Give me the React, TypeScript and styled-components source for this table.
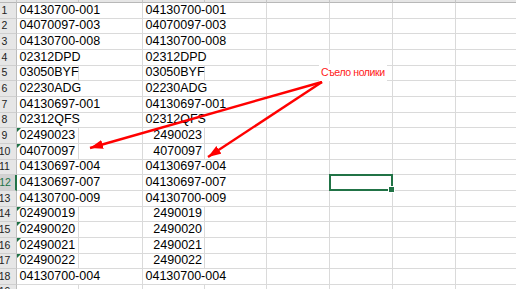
import styled, { createGlobalStyle } from 'styled-components'

type Row = { a: string; c: string; num?: boolean; short?: boolean }

const rows: Row[] = [
  { a: '04130700-001', c: '04130700-001' },
  { a: '04070097-003', c: '04070097-003' },
  { a: '04130700-008', c: '04130700-008' },
  { a: '02312DPD', c: '02312DPD' },
  { a: '03050BYF', c: '03050BYF', short: true },
  { a: '02230ADG', c: '02230ADG' },
  { a: '04130697-001', c: '04130697-001' },
  { a: '02312QFS', c: '02312QFS' },
  { a: '02490023', c: '2490023', num: true, short: true },
  { a: '04070097', c: '4070097', num: true, short: true },
  { a: '04130697-004', c: '04130697-004' },
  { a: '04130697-007', c: '04130697-007' },
  { a: '04130700-009', c: '04130700-009' },
  { a: '02490019', c: '2490019', num: true, short: true },
  { a: '02490020', c: '2490020', num: true, short: true },
  { a: '02490021', c: '2490021', num: true, short: true },
  { a: '02490022', c: '2490022', num: true, short: true },
  { a: '04130700-004', c: '04130700-004' },
  { a: '', c: '', short: true },
]

const SELECTED_ROW = 12
const COLS = ['62px', '64px', '62px', '62px', '63px', '63px', '63px', '63px']

const GlobalStyle = createGlobalStyle`
  body {
    margin: 0;
    background: #fff;
    overflow: hidden;
  }
`

const Sheet = styled.div`
  position: relative;
  width: 516px;
  height: 289px;
  overflow: hidden;
  font-family: 'Liberation Sans', Arial, sans-serif;
`

const Grid = styled.div`
  display: grid;
  grid-template-columns: 17px ${COLS.join(' ')};
  grid-template-rows: 3px;
  grid-auto-rows: 15.67px;
`

const ColHead = styled.div`
  background: #e6e6e6;
  border-right: 1px solid #c6c6c6;
  border-bottom: 1px solid #b8b8b8;
  box-sizing: border-box;
`

const RowHead = styled.div<{ $active?: boolean }>`
  display: flex;
  align-items: flex-end;
  justify-content: center;
  padding: 0 ${(p) => (p.$active ? 5 : 7)}px 1px 0;
  box-sizing: border-box;
  overflow: visible;
  white-space: nowrap;
  font-size: 10.5px;
  line-height: 13px;
  color: ${(p) => (p.$active ? '#217346' : '#222')};
  background: ${(p) => (p.$active ? '#d2d2d2' : '#e6e6e6')};
  border-bottom: 1px solid #cfcfcf;
  border-right: ${(p) => (p.$active ? '2px solid #217346' : '1px solid #bdbdbd')};
`

const Cell = styled.div<{ $span?: number; $num?: boolean; $flag?: boolean; $selected?: boolean }>`
  position: relative;
  grid-column: span ${(p) => p.$span ?? 1};
  display: flex;
  align-items: flex-end;
  justify-content: ${(p) => (p.$num ? 'flex-end' : 'flex-start')};
  padding: 0 2px 1px 2.5px;
  box-sizing: border-box;
  white-space: nowrap;
  font-size: 12.5px;
  line-height: 14px;
  color: #000;
  border-right: 1px solid #dadada;
  border-bottom: 1px solid #dadada;

  &::before {
    content: '';
    display: ${(p) => (p.$flag ? 'block' : 'none')};
    position: absolute;
    left: 0;
    top: 0;
    border-top: 4px solid #1e7145;
    border-right: 4px solid transparent;
  }

  &::after {
    content: '';
    display: ${(p) => (p.$selected ? 'block' : 'none')};
    position: absolute;
    left: -1px;
    top: -1px;
    right: -1px;
    bottom: -1px;
    border: 2px solid #217346;
  }
`

const Handle = styled.span`
  position: absolute;
  right: -3px;
  bottom: -3px;
  width: 5px;
  height: 5px;
  background: #217346;
  border: 1px solid #fff;
  z-index: 2;
`

const Overlay = styled.svg`
  position: absolute;
  inset: 0;
  pointer-events: none;
`

const Note = styled.div`
  position: absolute;
  left: 319px;
  top: 64px;
  padding: 2px 2px 3px 2px;
  background: #fff;
  color: #ff1a1a;
  font-size: 10.5px;
  letter-spacing: -0.4px;
  line-height: 12px;
`

export default function App() {
  return (
    <Sheet>
      <GlobalStyle />
      <Grid>
        <ColHead />
        {COLS.map((_, i) => (
          <ColHead key={i} />
        ))}
        {rows.map((r, i) => {
          const n = i + 1
          const active = n === SELECTED_ROW
          return [
            <RowHead key={`h${n}`} $active={active}>
              {n}
            </RowHead>,
            <Cell key={`a${n}`} $span={r.short ? 1 : 2} $flag={r.num}>
              {r.a}
            </Cell>,
            r.short ? <Cell key={`b${n}`} /> : null,
            <Cell key={`c${n}`} $span={r.short ? 1 : 2} $num={r.num}>
              {r.c}
            </Cell>,
            r.short ? <Cell key={`d${n}`} /> : null,
            <Cell key={`e${n}`} />,
            <Cell key={`f${n}`} $selected={active}>
              {active ? <Handle /> : null}
            </Cell>,
            <Cell key={`g${n}`} />,
            <Cell key={`i${n}`} />,
          ]
        })}
      </Grid>

      <Overlay width="516" height="289" viewBox="0 0 516 289">
        <defs>
          <marker
            id="head"
            markerUnits="userSpaceOnUse"
            markerWidth="14"
            markerHeight="10"
            refX="13"
            refY="4.5"
            orient="auto"
          >
            <path d="M0,0 L13,4.5 L0,9 z" fill="#ff0000" />
          </marker>
        </defs>
        <line x1="322" y1="82" x2="90" y2="148" stroke="#ff0000" strokeWidth="2.4" markerEnd="url(#head)" />
        <line x1="322" y1="82" x2="208" y2="157" stroke="#ff0000" strokeWidth="2.4" markerEnd="url(#head)" />
      </Overlay>
      <Note>Съело нолики</Note>
    </Sheet>
  )
}
